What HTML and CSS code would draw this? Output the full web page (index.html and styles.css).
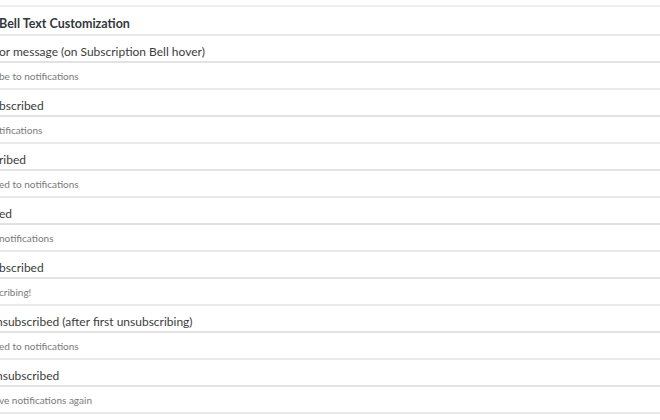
FILE: index.html
```html
<!DOCTYPE html>
<html>
<head>
<meta charset="utf-8">
<link rel="stylesheet" href="styles.css">
</head>
<body>
<div class="panel">
  <h2 class="title">Bell Text Customization</h2>
  <div class="field"><div class="label">or message (on Subscription Bell hover)</div><div class="input">be to notifications</div></div>
  <div class="field"><div class="label">bscribed</div><div class="input">tifications</div></div>
  <div class="field"><div class="label">ribed</div><div class="input">ed to notifications</div></div>
  <div class="field"><div class="label">ed</div><div class="input">notifications</div></div>
  <div class="field"><div class="label">bscribed</div><div class="input">cribing!</div></div>
  <div class="field"><div class="label clip">nsubscribed (after first unsubscribing)</div><div class="input">ed to notifications</div></div>
  <div class="field"><div class="label clip">nsubscribed</div><div class="input">ve notifications again</div></div>
</div>
</body>
</html>
```
FILE: styles.css
```css
html, body {
  margin: 0;
  padding: 0;
  background: #ffffff;
}
body {
  font-family: Lato, "Open Sans", sans-serif;
  overflow: hidden;
}
.panel {
  margin-top: 5px;
  margin-left: -1px;
  border-top: 2px solid #eeeeee;
}
.title {
  margin: 0;
  height: 27px;
  line-height: 34px;
  font-size: 12.5px;
  font-weight: 700;
  color: #32373c;
  border-bottom: 2px solid #eaeaea;
}
.label {
  height: 25px;
  line-height: 32px;
  font-size: 12px;
  color: #3c3c3c;
  border-bottom: 2px solid #e2e2e2;
}
.label.clip {
  text-indent: -3px;
}
.input {
  height: 25px;
  line-height: 26px;
  font-size: 10px;
  color: #7a7a7a;
  border-bottom: 2px solid #eaeaea;
}
```
